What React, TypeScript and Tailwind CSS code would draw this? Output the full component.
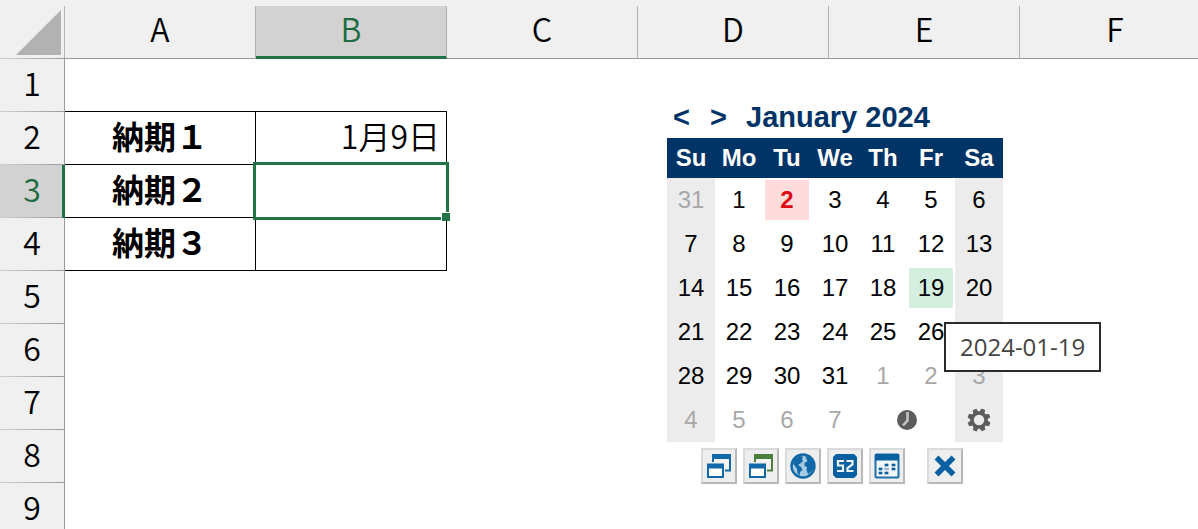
import { useState } from "react";
import clsx from "clsx";

const columns = ["A", "B", "C", "D", "E", "F"];
const rows = [1, 2, 3, 4, 5, 6, 7, 8, 9];

const cells: { [key: string]: string } = {
  A2: "納期１",
  A3: "納期２",
  A4: "納期３",
  B2: "1月9日",
};

const weekdays = ["Su", "Mo", "Tu", "We", "Th", "Fr", "Sa"];

// "out" marks days outside of the month
const weeks: { day: number; out?: boolean }[][] = [
  [{ day: 31, out: true }, { day: 1 }, { day: 2 }, { day: 3 }, { day: 4 }, { day: 5 }, { day: 6 }],
  [7, 8, 9, 10, 11, 12, 13].map((day) => ({ day })),
  [14, 15, 16, 17, 18, 19, 20].map((day) => ({ day })),
  [21, 22, 23, 24, 25, 26, 27].map((day) => ({ day })),
  [{ day: 28 }, { day: 29 }, { day: 30 }, { day: 31 }, { day: 1, out: true }, { day: 2, out: true }, { day: 3, out: true }],
  [4, 5, 6, 7].map((day) => ({ day, out: true })),
];

function Sheet() {
  const [selected, setSelected] = useState("B3");

  const borderFor = (col: string, row: number) => {
    if (col !== "A" && col !== "B") return "";
    if (row === 1) return "border-b border-black";
    if (row <= 4) return "border-b border-r border-black";
    return "";
  };

  return (
    <table className="w-max table-fixed border-separate border-spacing-0 font-['Noto_Sans_CJK_JP',sans-serif] text-[32px] leading-8">
      <thead>
        <tr>
          <th className="w-[65px] p-0">
            <div className="flex h-[59px] flex-col bg-[#f0f0f0]">
              <div className="mt-1.5 flex flex-1 items-end justify-end border-r border-[#b4b4b4] pr-[3px] pb-[3px]">
                <svg width="45" height="45" viewBox="0 0 45 45" aria-hidden="true">
                  <path d="M45 0V45H0Z" fill="#b2b2b2" />
                </svg>
              </div>
              <div className="h-px bg-linear-to-r from-[#d0d0d0] to-[#9b9b9b]" />
            </div>
          </th>
          {columns.map((col) => {
            const active = selected.startsWith(col);
            return (
              <th key={col} scope="col" className="w-[191px] bg-[#f0f0f0] p-0 pt-1.5 font-[350]">
                <div
                  className={clsx(
                    "flex h-[53px] items-center justify-center border-r border-r-[#b0b0b0]",
                    active
                      ? "border-b-3 border-b-[#217346] bg-[#d2d2d2] pb-1.5 text-[#1e6b41]"
                      : "border-b border-b-[#9b9b9b] pb-2",
                  )}
                >
                  {col}
                </div>
              </th>
            );
          })}
        </tr>
      </thead>
      <tbody>
        {rows.map((row) => {
          const active = selected.endsWith(String(row));
          return (
            <tr key={row}>
              <th scope="row" className="p-0 font-[350]">
                <div
                  className={clsx(
                    "flex h-[53px] flex-col",
                    active
                      ? "border-r-3 border-[#217346] bg-[#d2d2d2] text-[#1e6b41]"
                      : "border-r border-[#9b9b9b] bg-[#f0f0f0]",
                  )}
                >
                  <div className={clsx("flex flex-1 items-center justify-center pb-1.5", active ? "pl-0.5" : "")}>{row}</div>
                  <div className="h-px bg-linear-to-r from-[#d0d0d0] to-[#9b9b9b]" />
                </div>
              </th>
              {columns.map((col) => {
                const id = `${col}${row}`;
                return (
                  <td
                    key={id}
                    onClick={() => setSelected(id)}
                    className={clsx(
                      "relative h-[53px] p-0 pb-1.5",
                      borderFor(col, row),
                      col === "A" ? "text-center font-bold" : "pr-1.5 text-right font-[350]",
                    )}
                  >
                    {cells[id]}
                    {selected === id && (
                      <div className="absolute -inset-[3px] z-10 border-3 border-[#217346]">
                        <div className="absolute -right-1 -bottom-1 size-[9px] border-t border-l border-white bg-[#217346]" />
                      </div>
                    )}
                  </td>
                );
              })}
            </tr>
          );
        })}
      </tbody>
    </table>
  );
}

function ClockIcon() {
  return (
    <svg width="20" height="20" viewBox="0 0 20 20" aria-hidden="true">
      <circle cx="10" cy="10" r="10" fill="#5c5c5c" />
      <path d="M10.500 2V10.500L6 15.500" fill="none" stroke="#c4c4c4" strokeWidth="2.600" />
    </svg>
  );
}

function GearIcon() {
  return (
    <svg width="24" height="24" viewBox="-12 -12 24 24" aria-hidden="true">
      <g fill="#5c5c5c">
        {[22, 67, 112, 157, 202, 247, 292, 337].map((angle) => (
          <path key={angle} d="M-2.800 -7L-2 -11.500H2L2.800 -7Z" transform={`rotate(${angle})`} />
        ))}
      </g>
      <circle r="7" fill="none" stroke="#5c5c5c" strokeWidth="3.600" />
    </svg>
  );
}

function WindowsIcon({ back }: { back: string }) {
  return (
    <svg width="26" height="26" viewBox="0 0 26 26" aria-hidden="true">
      <path d="M6 1H25V18H6Z" fill="#f4f4f4" />
      <path d="M6 1H25V6H6Z" fill={back} />
      <path d="M7 1V9M24 5V17.500H19" fill="none" stroke={back} strokeWidth="2" />
      <path d="M0 9H19V25H0Z" fill="#eeeeee" />
      <path d="M1 10.500H18V25H1Z" fill="#1068a8" />
      <path d="M3 15.500H16V23H3Z" fill="#fff" />
    </svg>
  );
}

function GlobeIcon() {
  return (
    <svg width="26" height="26" viewBox="0 0 26 26" aria-hidden="true">
      <circle cx="13" cy="13" r="11.500" fill="#a9cbe2" stroke="#1068a8" strokeWidth="2.400" />
      <path d="M4 7L9 3L13 3.500L12 6L13 8L11 10L8 12L11 14L12.500 17L10 19L9.500 23L7.500 20L7 16L5 13L3 11Z" fill="#1068a8" />
      <path d="M15 3L19 4L23 9L24 14L21 19L18 21L16.500 17L17 14L14.500 13L14.500 10L17.500 8Z" fill="#1068a8" />
    </svg>
  );
}

function WeekNumberIcon() {
  return (
    <svg width="24" height="24" viewBox="0 0 24 24" aria-hidden="true">
      <path d="M3 0H21L24 3V21L21 24H3L0 21V3Z" fill="#0860a0" />
      <path d="M11 7H5V11.500H10V17H4M13.500 7H19.500V10.500L14.500 14V17H20.500" fill="none" stroke="#f0f4f8" strokeWidth="2.200" />
    </svg>
  );
}

function MonthIcon() {
  return (
    <svg width="26" height="26" viewBox="0 0 26 26" aria-hidden="true">
      <rect x="1.500" y="1.500" width="23" height="23" rx="1" fill="#f4f7fa" stroke="#1d70ac" strokeWidth="2" />
      <path d="M1 1H25V7.500H1Z" fill="#0860a0" />
      <path d="M10 12H15M17 12H22M4 16H9M10 16H15M17 16H22M4 20H9M10 20H15" stroke="#9dbdd6" strokeWidth="2.600" />
      <path d="M11 12H14M18 12H21M5 16H8M18 16H21M5 20H8M11 20H14" stroke="#0860a0" strokeWidth="2.600" />
    </svg>
  );
}

function CloseIcon() {
  return (
    <svg width="22" height="22" viewBox="0 0 22 22" aria-hidden="true">
      <path d="M2.500 2.500L19.500 19.500M19.500 2.500L2.500 19.500" stroke="#0860a0" strokeWidth="5.500" />
    </svg>
  );
}

const tools = [
  { label: "Popup window", icon: <WindowsIcon back="#1068a8" /> },
  { label: "Dock window", icon: <WindowsIcon back="#4b7f3c" /> },
  { label: "Time zone", icon: <GlobeIcon /> },
  { label: "Week numbers", icon: <WeekNumberIcon /> },
  { label: "Month view", icon: <MonthIcon /> },
  { label: "Close", icon: <CloseIcon /> },
];

function DatePicker() {
  return (
    <section className="absolute top-[98px] left-[667px] w-[336px] font-['Liberation_Sans',Arial,sans-serif] text-2xl">
      <div className="flex h-10 items-center pb-0.5 pl-1.5 text-[29px] leading-[38px] font-bold text-[#003366]">
        <button aria-label="Previous month" className="w-[37px] text-left">&lt;</button>
        <button aria-label="Next month" className="w-9 text-left">&gt;</button>
        <h2>January 2024</h2>
      </div>
      <table className="w-full table-fixed border-separate border-spacing-0 text-center">
        <thead>
          <tr className="bg-[#003366] text-white">
            {weekdays.map((name) => (
              <th key={name} scope="col" className="h-10 p-0">{name}</th>
            ))}
          </tr>
        </thead>
        <tbody>
          {weeks.map((week, i) => (
            <tr key={i}>
              {week.map(({ day, out }, j) => (
                <td key={j} className={clsx("relative h-11 p-0.5", j === 0 || j === 6 ? "bg-[#ececec]" : "")}>
                  <button
                    aria-label={String(day)}
                    className={clsx(
                      "block h-10 w-full",
                      out && "text-[#a8a8a8]",
                      day === 2 && !out && "bg-[#ffdcdc] font-bold text-[#dd0a14]",
                      day === 19 && "bg-[#d4efe0]",
                    )}
                  >
                    {/* 27 sits under the open tooltip */}
                    {day !== 27 && day}
                  </button>
                  {day === 19 && (
                    <div
                      role="tooltip"
                      className="absolute top-14 left-[37px] z-10 border-2 border-[#2b2b2b] bg-white px-3.5 py-[7px] font-['Open_Sans',sans-serif] leading-8 whitespace-nowrap text-[#444]"
                    >
                      2024-01-19
                    </div>
                  )}
                </td>
              ))}
              {i === 5 && (
                <>
                  <td colSpan={2} className="h-11 p-0">
                    <button aria-label="Time" className="mx-auto block"><ClockIcon /></button>
                  </td>
                  <td className="h-11 bg-[#ececec] p-0">
                    <button aria-label="Settings" className="mx-auto block"><GearIcon /></button>
                  </td>
                </>
              )}
            </tr>
          ))}
        </tbody>
      </table>
      <div className="mt-1.5 flex gap-1.5 pr-10 pl-[34px]">
        {tools.map(({ label, icon }) => (
          <button
            key={label}
            aria-label={label}
            className="flex size-9 shrink-0 items-center justify-center border-2 border-t-[#dadada] border-r-[#b8b8b8] border-b-[#b8b8b8] border-l-[#dadada] bg-[#eeeeee] last:ml-auto"
          >
            {icon}
          </button>
        ))}
      </div>
    </section>
  );
}

export default function App() {
  return (
    <main className="relative h-screen overflow-hidden bg-white text-black">
      <Sheet />
      <DatePicker />
    </main>
  );
}
